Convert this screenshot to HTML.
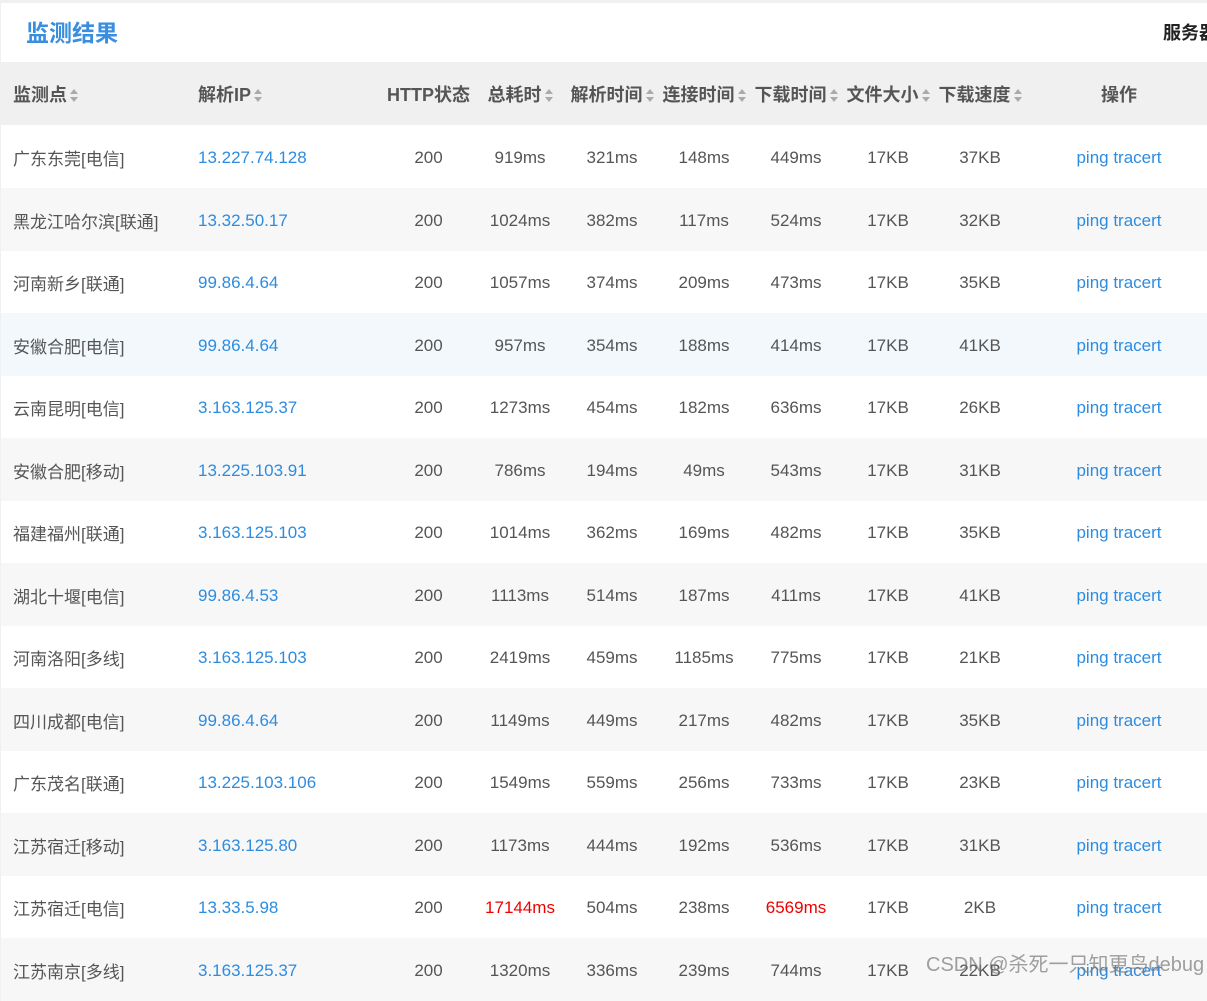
<!DOCTYPE html>
<html><head><meta charset="utf-8"><style>
*{margin:0;padding:0;box-sizing:border-box}
body{width:1207px;height:981px;overflow:hidden;background:#eef0f2;font-family:"Liberation Sans","Noto Sans CJK SC",sans-serif;color:#555;position:relative}
.wrap{position:absolute;left:1px;top:3px;width:1210px;height:980px;background:#fff}
.title{position:absolute;left:25px;top:11px;font-size:23px;font-weight:bold;color:#3a8ee0}
.srv{position:absolute;left:1162px;top:16px;font-size:18px;font-weight:bold;color:#222;white-space:nowrap}
.row{position:absolute;left:0;width:1210px;height:63px;display:flex;align-items:center;font-size:17px;padding-top:2px}
.hd{top:59px;height:63px;background:#f0f0f0;font-weight:bold;font-size:18px;color:#555;padding-top:1px}
.c{flex:none;text-align:center;white-space:nowrap}
.c1{width:197px;padding-left:12px;text-align:left}
.c2{width:185px;text-align:left}
.c3,.c4,.c5,.c6,.c7,.c8,.c9{width:92px}
.c3{width:91px}
.c10{width:186px}
.b{color:#2d8ce0}
.r{color:#e00}
.s{display:inline-block;width:8px;height:13px;vertical-align:middle;margin-left:3px;position:relative;top:-1px}
.s:before{content:"";position:absolute;left:0;top:0;border-left:4px solid transparent;border-right:4px solid transparent;border-bottom:5px solid #aaa}
.s:after{content:"";position:absolute;left:0;bottom:0;border-left:4px solid transparent;border-right:4px solid transparent;border-top:5px solid #aaa}
.g{background:#f7f7f7}
.h{background:#f3f8fc}
.wm{position:absolute;left:926px;top:948px;font-size:20px;color:rgba(120,120,120,.7);white-space:nowrap}
</style></head><body><div class="wrap">
<div class="title">监测结果</div><div class="srv">服务器</div>
<div class="row hd"><span class="c c1">监测点<i class="s"></i></span><span class="c c2">解析IP<i class="s"></i></span><span class="c c3">HTTP状态</span><span class="c c4">总耗时<i class="s"></i></span><span class="c c5">解析时间<i class="s"></i></span><span class="c c6">连接时间<i class="s"></i></span><span class="c c7">下载时间<i class="s"></i></span><span class="c c8">文件大小<i class="s"></i></span><span class="c c9">下载速度<i class="s"></i></span><span class="c c10">操作</span></div>
<div class="row" style="top:122px"><span class="c c1">广东东莞[电信]</span><span class="c c2 b">13.227.74.128</span><span class="c c3">200</span><span class="c c4">919ms</span><span class="c c5">321ms</span><span class="c c6">148ms</span><span class="c c7">449ms</span><span class="c c8">17KB</span><span class="c c9">37KB</span><span class="c c10 b">ping tracert</span></div>
<div class="row g" style="top:185px"><span class="c c1">黑龙江哈尔滨[联通]</span><span class="c c2 b">13.32.50.17</span><span class="c c3">200</span><span class="c c4">1024ms</span><span class="c c5">382ms</span><span class="c c6">117ms</span><span class="c c7">524ms</span><span class="c c8">17KB</span><span class="c c9">32KB</span><span class="c c10 b">ping tracert</span></div>
<div class="row" style="top:247px"><span class="c c1">河南新乡[联通]</span><span class="c c2 b">99.86.4.64</span><span class="c c3">200</span><span class="c c4">1057ms</span><span class="c c5">374ms</span><span class="c c6">209ms</span><span class="c c7">473ms</span><span class="c c8">17KB</span><span class="c c9">35KB</span><span class="c c10 b">ping tracert</span></div>
<div class="row h" style="top:310px"><span class="c c1">安徽合肥[电信]</span><span class="c c2 b">99.86.4.64</span><span class="c c3">200</span><span class="c c4">957ms</span><span class="c c5">354ms</span><span class="c c6">188ms</span><span class="c c7">414ms</span><span class="c c8">17KB</span><span class="c c9">41KB</span><span class="c c10 b">ping tracert</span></div>
<div class="row" style="top:372px"><span class="c c1">云南昆明[电信]</span><span class="c c2 b">3.163.125.37</span><span class="c c3">200</span><span class="c c4">1273ms</span><span class="c c5">454ms</span><span class="c c6">182ms</span><span class="c c7">636ms</span><span class="c c8">17KB</span><span class="c c9">26KB</span><span class="c c10 b">ping tracert</span></div>
<div class="row g" style="top:435px"><span class="c c1">安徽合肥[移动]</span><span class="c c2 b">13.225.103.91</span><span class="c c3">200</span><span class="c c4">786ms</span><span class="c c5">194ms</span><span class="c c6">49ms</span><span class="c c7">543ms</span><span class="c c8">17KB</span><span class="c c9">31KB</span><span class="c c10 b">ping tracert</span></div>
<div class="row" style="top:497px"><span class="c c1">福建福州[联通]</span><span class="c c2 b">3.163.125.103</span><span class="c c3">200</span><span class="c c4">1014ms</span><span class="c c5">362ms</span><span class="c c6">169ms</span><span class="c c7">482ms</span><span class="c c8">17KB</span><span class="c c9">35KB</span><span class="c c10 b">ping tracert</span></div>
<div class="row g" style="top:560px"><span class="c c1">湖北十堰[电信]</span><span class="c c2 b">99.86.4.53</span><span class="c c3">200</span><span class="c c4">1113ms</span><span class="c c5">514ms</span><span class="c c6">187ms</span><span class="c c7">411ms</span><span class="c c8">17KB</span><span class="c c9">41KB</span><span class="c c10 b">ping tracert</span></div>
<div class="row" style="top:622px"><span class="c c1">河南洛阳[多线]</span><span class="c c2 b">3.163.125.103</span><span class="c c3">200</span><span class="c c4">2419ms</span><span class="c c5">459ms</span><span class="c c6">1185ms</span><span class="c c7">775ms</span><span class="c c8">17KB</span><span class="c c9">21KB</span><span class="c c10 b">ping tracert</span></div>
<div class="row g" style="top:685px"><span class="c c1">四川成都[电信]</span><span class="c c2 b">99.86.4.64</span><span class="c c3">200</span><span class="c c4">1149ms</span><span class="c c5">449ms</span><span class="c c6">217ms</span><span class="c c7">482ms</span><span class="c c8">17KB</span><span class="c c9">35KB</span><span class="c c10 b">ping tracert</span></div>
<div class="row" style="top:747px"><span class="c c1">广东茂名[联通]</span><span class="c c2 b">13.225.103.106</span><span class="c c3">200</span><span class="c c4">1549ms</span><span class="c c5">559ms</span><span class="c c6">256ms</span><span class="c c7">733ms</span><span class="c c8">17KB</span><span class="c c9">23KB</span><span class="c c10 b">ping tracert</span></div>
<div class="row g" style="top:810px"><span class="c c1">江苏宿迁[移动]</span><span class="c c2 b">3.163.125.80</span><span class="c c3">200</span><span class="c c4">1173ms</span><span class="c c5">444ms</span><span class="c c6">192ms</span><span class="c c7">536ms</span><span class="c c8">17KB</span><span class="c c9">31KB</span><span class="c c10 b">ping tracert</span></div>
<div class="row" style="top:872px"><span class="c c1">江苏宿迁[电信]</span><span class="c c2 b">13.33.5.98</span><span class="c c3">200</span><span class="c c4 r">17144ms</span><span class="c c5">504ms</span><span class="c c6">238ms</span><span class="c c7 r">6569ms</span><span class="c c8">17KB</span><span class="c c9">2KB</span><span class="c c10 b">ping tracert</span></div>
<div class="row g" style="top:935px"><span class="c c1">江苏南京[多线]</span><span class="c c2 b">3.163.125.37</span><span class="c c3">200</span><span class="c c4">1320ms</span><span class="c c5">336ms</span><span class="c c6">239ms</span><span class="c c7">744ms</span><span class="c c8">17KB</span><span class="c c9">22KB</span><span class="c c10 b">ping tracert</span></div>
</div>
<div class="wm">CSDN @杀死一只知更鸟debug</div>
</body></html>
